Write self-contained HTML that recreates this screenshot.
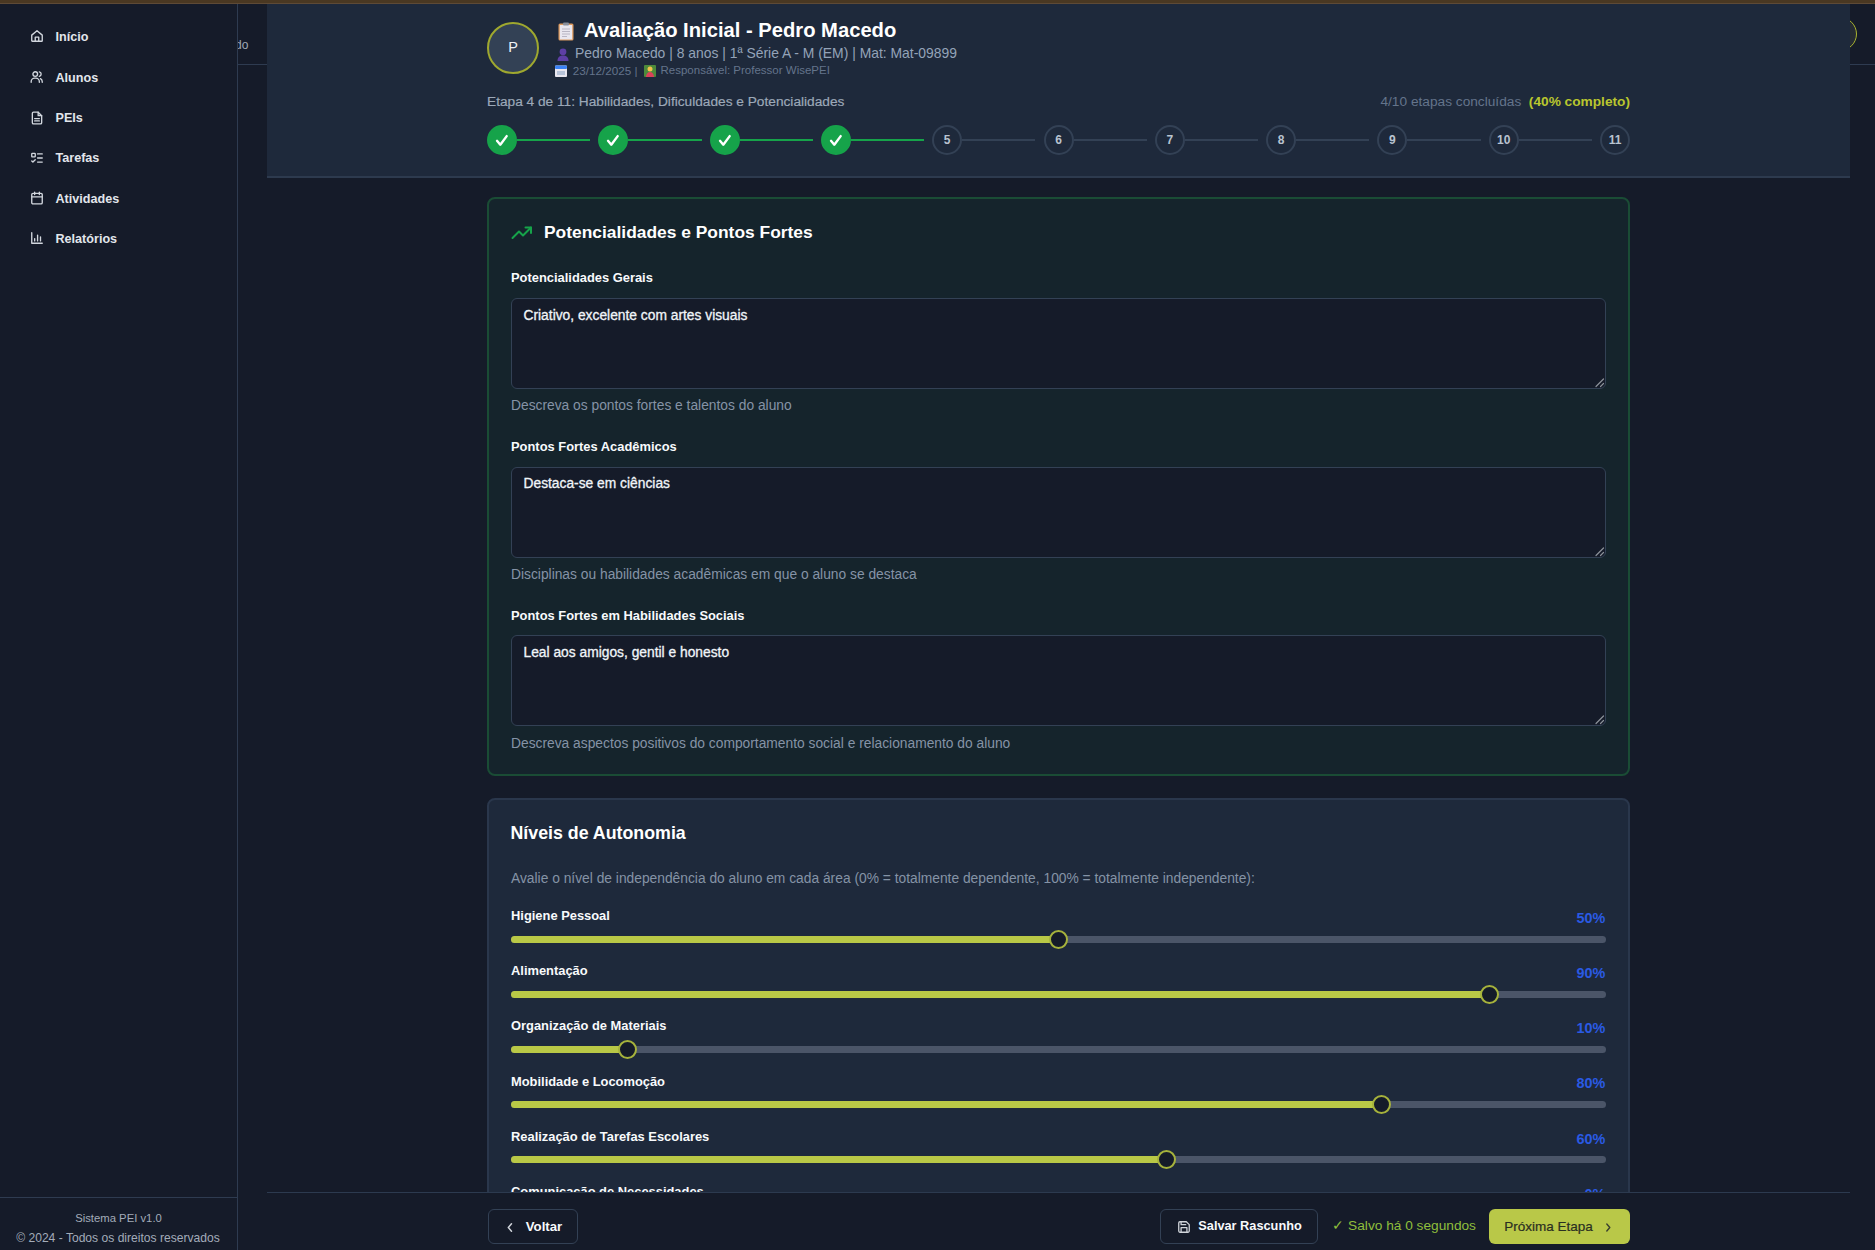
<!DOCTYPE html>
<html lang="pt-BR">
<head>
<meta charset="utf-8">
<title>Avaliação Inicial - Pedro Macedo</title>
<style>
*{box-sizing:border-box;margin:0;padding:0}
html,body{width:1875px;height:1250px;overflow:hidden}
body{background:#151b29;font-family:"Liberation Sans",sans-serif;color:#e5e7eb;position:relative}
.abs{position:absolute;white-space:nowrap}
.box{position:absolute}
.step{position:absolute;top:125px;width:30px;height:30px;border-radius:50%;border:2px solid #334155;text-align:center;font-size:12px;line-height:27px;font-weight:bold;color:#b9c3d0}
.step.done{background:#16a34a;border-color:#16a34a}
.step svg{position:absolute;left:-2px;top:-2px}
</style>
</head>
<body>
<div class="box" style="left:0;top:0;width:1875px;height:4px;background:#4a3822;border-bottom:1px solid #5e4a36"></div>
<div class="abs" style="left:235px;top:39.14px;font-size:12px;line-height:12px;color:#a0a8b4;">do</div>
<div class="box" style="left:0;top:4px;width:238px;height:1246px;background:#151b29;border-right:1px solid #2e3b50"></div>
<svg class="abs" style="left:29.5px;top:29.3px" width="14" height="14" viewBox="0 0 24 24" fill="none" stroke="#d2d7de" stroke-width="2.3" stroke-linecap="round" stroke-linejoin="round"><path d="M3 10.5 12 3l9 7.5V20a1 1 0 0 1-1 1H4a1 1 0 0 1-1-1z"/><path d="M9 21v-7h6v7"/></svg>
<div class="abs" style="left:55.5px;top:30.83px;font-size:12.6px;line-height:12.6px;color:#e2e6ec;font-weight:bold;">Início</div>
<svg class="abs" style="left:29.5px;top:70.3px" width="14" height="14" viewBox="0 0 24 24" fill="none" stroke="#d2d7de" stroke-width="2.3" stroke-linecap="round" stroke-linejoin="round"><circle cx="9" cy="7" r="4"/><path d="M2 21v-1a6 6 0 0 1 6-6h2a6 6 0 0 1 6 6v1"/><path d="M16 3.1a4 4 0 0 1 0 7.8"/><path d="M21 21v-1a6 6 0 0 0-3-5.2"/></svg>
<div class="abs" style="left:55.5px;top:71.83px;font-size:12.6px;line-height:12.6px;color:#e2e6ec;font-weight:bold;">Alunos</div>
<svg class="abs" style="left:29.5px;top:110.8px" width="14" height="14" viewBox="0 0 24 24" fill="none" stroke="#d2d7de" stroke-width="2.3" stroke-linecap="round" stroke-linejoin="round"><path d="M14 2H6a2 2 0 0 0-2 2v16a2 2 0 0 0 2 2h12a2 2 0 0 0 2-2V8z"/><path d="M14 2v6h6"/><path d="M8 13h8M8 17h8"/></svg>
<div class="abs" style="left:55.5px;top:112.33px;font-size:12.6px;line-height:12.6px;color:#e2e6ec;font-weight:bold;">PEIs</div>
<svg class="abs" style="left:29.5px;top:150.5px" width="14" height="14" viewBox="0 0 24 24" fill="none" stroke="#d2d7de" stroke-width="2.3" stroke-linecap="round" stroke-linejoin="round"><path d="M13 5h8M13 12h8M13 19h8"/><path d="M3 17l2 2 4-4"/><rect x="3" y="4" width="6" height="6" rx="1"/></svg>
<div class="abs" style="left:55.5px;top:152.03px;font-size:12.6px;line-height:12.6px;color:#e2e6ec;font-weight:bold;">Tarefas</div>
<svg class="abs" style="left:29.5px;top:191.3px" width="14" height="14" viewBox="0 0 24 24" fill="none" stroke="#d2d7de" stroke-width="2.3" stroke-linecap="round" stroke-linejoin="round"><rect x="3" y="4" width="18" height="18" rx="2"/><path d="M16 2v4M8 2v4M3 10h18"/></svg>
<div class="abs" style="left:55.5px;top:192.83px;font-size:12.6px;line-height:12.6px;color:#e2e6ec;font-weight:bold;">Atividades</div>
<svg class="abs" style="left:29.5px;top:231.3px" width="14" height="14" viewBox="0 0 24 24" fill="none" stroke="#d2d7de" stroke-width="2.3" stroke-linecap="round" stroke-linejoin="round"><path d="M3 3v18h18"/><path d="M8 17v-4M13 17V7M18 17v-7"/></svg>
<div class="abs" style="left:55.5px;top:232.83px;font-size:12.6px;line-height:12.6px;color:#e2e6ec;font-weight:bold;">Relatórios</div>
<div class="box" style="left:0;top:1196.5px;width:237px;height:1.5px;background:#2e3b50"></div>
<div class="abs" style="left:-81.5px;width:400px;text-align:center;top:1213.13px;font-size:11.3px;line-height:11.3px;color:#a3acb9;">Sistema PEI v1.0</div>
<div class="abs" style="left:-82px;width:400px;text-align:center;top:1231.66px;font-size:12.1px;line-height:12.1px;color:#a3acb9;">© 2024 - Todos os direitos reservados</div>
<div class="box" style="left:238px;top:63.5px;width:1637px;height:1.5px;background:#2e3b50"></div>
<div class="box" style="left:1823px;top:17px;width:34px;height:34px;border-radius:50%;border:1.5px solid #a9b32e;background:#252b33"></div>
<div class="box" style="left:267px;top:4px;width:1583px;height:1246px;background:#151b29"></div>
<div class="box" style="left:267px;top:4px;width:1583px;height:174px;background:#1e293b;border-bottom:2px solid #2d3a4e"></div>
<div class="box" style="left:487px;top:22px;width:52px;height:52px;border-radius:50%;border:2px solid #9fa82f;background:#334155"></div>
<div class="abs" style="left:313px;width:400px;text-align:center;top:40.03px;font-size:14.5px;line-height:14.5px;color:#eef2f6;">P</div>
<svg class="abs" style="left:558px;top:22px" width="16" height="19" viewBox="0 0 16 19"><rect x="0.5" y="1.5" width="15" height="17" rx="1.5" fill="#dc9a5e"/><rect x="1.8" y="3" width="12.4" height="14.5" fill="#e9e7ef"/><rect x="5" y="0.5" width="6" height="3" rx="1" fill="#8a8f9a"/><path d="M4 7h8M4 9.5h8M4 12h8M4 14.5h5" stroke="#b9b6c4" stroke-width="1"/></svg>
<div class="abs" style="left:584px;top:20.00px;font-size:20.2px;line-height:20.2px;color:#ffffff;font-weight:bold;">Avaliação Inicial - Pedro Macedo</div>
<svg class="abs" style="left:557px;top:48px" width="12" height="13" viewBox="0 0 12 13"><circle cx="6" cy="3.8" r="3.4" fill="#5e3fa6"/><path d="M0.5 13c0-3.8 2.4-5.4 5.5-5.4s5.5 1.6 5.5 5.4z" fill="#5e3fa6"/></svg>
<div class="abs" style="left:575px;top:46.83px;font-size:13.9px;line-height:13.9px;color:#94a3b8;">Pedro Macedo | 8 anos | 1ª Série A - M (EM) | Mat: Mat-09899</div>
<svg class="abs" style="left:555px;top:65px" width="12" height="12" viewBox="0 0 12 12"><rect x="0" y="0.5" width="12" height="11.5" rx="1" fill="#e9e7f0"/><rect x="0" y="0.5" width="12" height="3.5" rx="1" fill="#3b82f6"/><rect x="2" y="6" width="8" height="4" fill="#b7c3d9"/></svg>
<div class="abs" style="left:572.8px;top:64.60px;font-size:11.7px;line-height:11.7px;color:#64748b;">23/12/2025 |</div>
<svg class="abs" style="left:644px;top:65px" width="12" height="12" viewBox="0 0 12 12"><rect x="0" y="0" width="12" height="12" rx="1" fill="#4d8a3a"/><circle cx="6" cy="4" r="2.5" fill="#f2c14e"/><path d="M2 12c0-3 1.8-5 4-5s4 2 4 5z" fill="#d9425a"/></svg>
<div class="abs" style="left:660.5px;top:64.77px;font-size:11.5px;line-height:11.5px;color:#64748b;">Responsável: Professor WisePEI</div>
<div class="abs" style="left:487px;top:95.00px;font-size:13.7px;line-height:13.7px;color:#9ca8b8;-webkit-text-stroke:0.2px #9ca8b8;">Etapa 4 de 11: Habilidades, Dificuldades e Potencialidades</div>
<div class="abs" style="right:245px;top:94.90px;font-size:13.7px;line-height:13.7px;color:#64748b;">4/10 etapas concluídas&nbsp; <b style="color:#b9c62e">(40% completo)</b></div>
<div class="step done" style="left:487.0px"><svg width="30" height="30" viewBox="0 0 30 30"><path d="M10 15.8l3.3 3.9 6.4-8.6" fill="none" stroke="#fff" stroke-width="2.4" stroke-linecap="round" stroke-linejoin="round"/></svg></div>
<div class="box" style="left:517.0px;top:139px;width:73.3px;height:2px;background:#16a34a"></div>
<div class="step done" style="left:598.3px"><svg width="30" height="30" viewBox="0 0 30 30"><path d="M10 15.8l3.3 3.9 6.4-8.6" fill="none" stroke="#fff" stroke-width="2.4" stroke-linecap="round" stroke-linejoin="round"/></svg></div>
<div class="box" style="left:628.3px;top:139px;width:73.3px;height:2px;background:#16a34a"></div>
<div class="step done" style="left:709.6px"><svg width="30" height="30" viewBox="0 0 30 30"><path d="M10 15.8l3.3 3.9 6.4-8.6" fill="none" stroke="#fff" stroke-width="2.4" stroke-linecap="round" stroke-linejoin="round"/></svg></div>
<div class="box" style="left:739.6px;top:139px;width:73.3px;height:2px;background:#16a34a"></div>
<div class="step done" style="left:820.9px"><svg width="30" height="30" viewBox="0 0 30 30"><path d="M10 15.8l3.3 3.9 6.4-8.6" fill="none" stroke="#fff" stroke-width="2.4" stroke-linecap="round" stroke-linejoin="round"/></svg></div>
<div class="box" style="left:850.9px;top:139px;width:73.3px;height:2px;background:#16a34a"></div>
<div class="step" style="left:932.2px">5</div>
<div class="box" style="left:962.2px;top:139px;width:73.3px;height:2px;background:#334155"></div>
<div class="step" style="left:1043.5px">6</div>
<div class="box" style="left:1073.5px;top:139px;width:73.3px;height:2px;background:#334155"></div>
<div class="step" style="left:1154.8px">7</div>
<div class="box" style="left:1184.8px;top:139px;width:73.3px;height:2px;background:#334155"></div>
<div class="step" style="left:1266.1px">8</div>
<div class="box" style="left:1296.1px;top:139px;width:73.3px;height:2px;background:#334155"></div>
<div class="step" style="left:1377.4px">9</div>
<div class="box" style="left:1407.4px;top:139px;width:73.3px;height:2px;background:#334155"></div>
<div class="step" style="left:1488.7px">10</div>
<div class="box" style="left:1518.7px;top:139px;width:73.3px;height:2px;background:#334155"></div>
<div class="step" style="left:1600.0px">11</div>
<div class="box" style="left:487px;top:197px;width:1143px;height:579px;border-radius:8px;border:2px solid #1a4c35;background:#15242c"></div>
<svg class="abs" style="left:511px;top:224px" width="22" height="16" viewBox="0 0 22 16" fill="none" stroke="#16a34a" stroke-width="2" stroke-linecap="round" stroke-linejoin="round"><path d="M1.5 14 8 7.5l4 4L20 3.5"/><path d="M14.5 3.5H20V9"/></svg>
<div class="abs" style="left:544px;top:223.97px;font-size:17.4px;line-height:17.4px;color:#ffffff;font-weight:bold;">Potencialidades e Pontos Fortes</div>
<div class="abs" style="left:511px;top:271.98px;font-size:12.9px;line-height:12.9px;color:#f8fafc;font-weight:bold;">Potencialidades Gerais</div>
<div class="box" style="left:511px;top:297.7px;width:1095px;height:91px;border-radius:6px;border:1px solid #334155;background:#151b29"></div>
<svg class="abs" style="left:1595px;top:377.7px" width="10" height="10" viewBox="0 0 10 10" stroke="#8c929a" stroke-width="1.2" stroke-linecap="round"><path d="M8.5 1 1 8.5M8.5 5.5 5.5 8.5"/></svg>
<div class="abs" style="left:523.5px;top:308.62px;font-size:13.8px;line-height:13.8px;color:#f1f5f9;-webkit-text-stroke:0.3px #f1f5f9;">Criativo, excelente com artes visuais</div>
<div class="abs" style="left:511px;top:399.02px;font-size:13.8px;line-height:13.8px;color:#8593a6;">Descreva os pontos fortes e talentos do aluno</div>
<div class="abs" style="left:511px;top:440.78px;font-size:12.9px;line-height:12.9px;color:#f8fafc;font-weight:bold;">Pontos Fortes Acadêmicos</div>
<div class="box" style="left:511px;top:466.5px;width:1095px;height:91px;border-radius:6px;border:1px solid #334155;background:#151b29"></div>
<svg class="abs" style="left:1595px;top:546.5px" width="10" height="10" viewBox="0 0 10 10" stroke="#8c929a" stroke-width="1.2" stroke-linecap="round"><path d="M8.5 1 1 8.5M8.5 5.5 5.5 8.5"/></svg>
<div class="abs" style="left:523.5px;top:477.42px;font-size:13.8px;line-height:13.8px;color:#f1f5f9;-webkit-text-stroke:0.3px #f1f5f9;">Destaca-se em ciências</div>
<div class="abs" style="left:511px;top:567.82px;font-size:13.8px;line-height:13.8px;color:#8593a6;">Disciplinas ou habilidades acadêmicas em que o aluno se destaca</div>
<div class="abs" style="left:511px;top:609.58px;font-size:12.9px;line-height:12.9px;color:#f8fafc;font-weight:bold;">Pontos Fortes em Habilidades Sociais</div>
<div class="box" style="left:511px;top:635.3px;width:1095px;height:91px;border-radius:6px;border:1px solid #334155;background:#151b29"></div>
<svg class="abs" style="left:1595px;top:715.3px" width="10" height="10" viewBox="0 0 10 10" stroke="#8c929a" stroke-width="1.2" stroke-linecap="round"><path d="M8.5 1 1 8.5M8.5 5.5 5.5 8.5"/></svg>
<div class="abs" style="left:523.5px;top:646.22px;font-size:13.8px;line-height:13.8px;color:#f1f5f9;-webkit-text-stroke:0.3px #f1f5f9;">Leal aos amigos, gentil e honesto</div>
<div class="abs" style="left:511px;top:736.62px;font-size:13.8px;line-height:13.8px;color:#8593a6;">Descreva aspectos positivos do comportamento social e relacionamento do aluno</div>
<div class="box" style="left:487px;top:798px;width:1143px;height:460px;border-radius:8px;border:2px solid #2a374c;background:#1e293b"></div>
<div class="abs" style="left:510.5px;top:824.63px;font-size:17.8px;line-height:17.8px;color:#ffffff;font-weight:bold;">Níveis de Autonomia</div>
<div class="abs" style="left:511px;top:872.42px;font-size:13.8px;line-height:13.8px;color:#8593a6;">Avalie o nível de independência do aluno em cada área (0% = totalmente dependente, 100% = totalmente independente):</div>
<div class="abs" style="left:511px;top:910.18px;font-size:12.9px;line-height:12.9px;color:#f8fafc;font-weight:bold;">Higiene Pessoal</div>
<div class="abs" style="right:269.79999999999995px;top:910.91px;font-size:14.4px;line-height:14.4px;color:#2a5ae4;font-weight:bold;">50%</div>
<div class="box" style="left:511px;top:935.6px;width:1095px;height:7px;border-radius:4px;background:#4b5568"></div>
<div class="box" style="left:511px;top:935.6px;width:547.5px;height:7px;border-radius:4px 0 0 4px;background:#b9c846"></div>
<div class="box" style="left:1049.0px;top:929.6px;width:19px;height:19px;border-radius:50%;border:2px solid #a6b23c;background:#151b29"></div>
<div class="abs" style="left:511px;top:965.33px;font-size:12.9px;line-height:12.9px;color:#f8fafc;font-weight:bold;">Alimentação</div>
<div class="abs" style="right:269.79999999999995px;top:966.06px;font-size:14.4px;line-height:14.4px;color:#2a5ae4;font-weight:bold;">90%</div>
<div class="box" style="left:511px;top:990.75px;width:1095px;height:7px;border-radius:4px;background:#4b5568"></div>
<div class="box" style="left:511px;top:990.75px;width:978.3px;height:7px;border-radius:4px 0 0 4px;background:#b9c846"></div>
<div class="box" style="left:1479.8px;top:984.75px;width:19px;height:19px;border-radius:50%;border:2px solid #a6b23c;background:#151b29"></div>
<div class="abs" style="left:511px;top:1020.48px;font-size:12.9px;line-height:12.9px;color:#f8fafc;font-weight:bold;">Organização de Materiais</div>
<div class="abs" style="right:269.79999999999995px;top:1021.21px;font-size:14.4px;line-height:14.4px;color:#2a5ae4;font-weight:bold;">10%</div>
<div class="box" style="left:511px;top:1045.9px;width:1095px;height:7px;border-radius:4px;background:#4b5568"></div>
<div class="box" style="left:511px;top:1045.9px;width:116.7px;height:7px;border-radius:4px 0 0 4px;background:#b9c846"></div>
<div class="box" style="left:618.2px;top:1039.9px;width:19px;height:19px;border-radius:50%;border:2px solid #a6b23c;background:#151b29"></div>
<div class="abs" style="left:511px;top:1075.63px;font-size:12.9px;line-height:12.9px;color:#f8fafc;font-weight:bold;">Mobilidade e Locomoção</div>
<div class="abs" style="right:269.79999999999995px;top:1076.36px;font-size:14.4px;line-height:14.4px;color:#2a5ae4;font-weight:bold;">80%</div>
<div class="box" style="left:511px;top:1101.05px;width:1095px;height:7px;border-radius:4px;background:#4b5568"></div>
<div class="box" style="left:511px;top:1101.05px;width:870.6px;height:7px;border-radius:4px 0 0 4px;background:#b9c846"></div>
<div class="box" style="left:1372.1px;top:1095.05px;width:19px;height:19px;border-radius:50%;border:2px solid #a6b23c;background:#151b29"></div>
<div class="abs" style="left:511px;top:1130.78px;font-size:12.9px;line-height:12.9px;color:#f8fafc;font-weight:bold;">Realização de Tarefas Escolares</div>
<div class="abs" style="right:269.79999999999995px;top:1131.51px;font-size:14.4px;line-height:14.4px;color:#2a5ae4;font-weight:bold;">60%</div>
<div class="box" style="left:511px;top:1156.2px;width:1095px;height:7px;border-radius:4px;background:#4b5568"></div>
<div class="box" style="left:511px;top:1156.2px;width:655.2px;height:7px;border-radius:4px 0 0 4px;background:#b9c846"></div>
<div class="box" style="left:1156.7px;top:1150.2px;width:19px;height:19px;border-radius:50%;border:2px solid #a6b23c;background:#151b29"></div>
<div class="abs" style="left:511px;top:1185.93px;font-size:12.9px;line-height:12.9px;color:#f8fafc;font-weight:bold;">Comunicação de Necessidades</div>
<div class="abs" style="right:269.79999999999995px;top:1186.66px;font-size:14.4px;line-height:14.4px;color:#2a5ae4;font-weight:bold;">0%</div>
<div class="box" style="left:511px;top:1211.35px;width:1095px;height:7px;border-radius:4px;background:#4b5568"></div>
<div class="box" style="left:511px;top:1211.35px;width:9.0px;height:7px;border-radius:4px 0 0 4px;background:#b9c846"></div>
<div class="box" style="left:510.5px;top:1205.35px;width:19px;height:19px;border-radius:50%;border:2px solid #a6b23c;background:#151b29"></div>
<div class="box" style="left:267px;top:1192px;width:1583px;height:58px;background:#151b29;border-top:1px solid #2c3a4f"></div>
<div class="box" style="left:487.5px;top:1209px;width:90px;height:35px;border-radius:6px;border:1px solid #334155"></div>
<svg class="abs" style="left:505px;top:1221.5px" width="10" height="11" viewBox="0 0 10 11" fill="none" stroke="#cfd3da" stroke-width="1.5" stroke-linecap="round" stroke-linejoin="round"><path d="M6.5 1.8 3.3 5.5l3.2 3.7"/></svg>
<div class="abs" style="left:525.8px;top:1219.83px;font-size:13.2px;line-height:13.2px;color:#f8fafc;font-weight:bold;">Voltar</div>
<div class="box" style="left:1160px;top:1209px;width:158px;height:35px;border-radius:6px;border:1px solid #334155"></div>
<svg class="abs" style="left:1176.5px;top:1220.2px" width="14" height="14" viewBox="0 0 24 24" fill="none" stroke="#d1d5db" stroke-width="2.2" stroke-linecap="round" stroke-linejoin="round"><path d="M19 21H5a2 2 0 0 1-2-2V5a2 2 0 0 1 2-2h11l5 5v11a2 2 0 0 1-2 2z"/><path d="M17 21v-8H7v8M7 3v5h8"/></svg>
<div class="abs" style="left:1198.3px;top:1220.21px;font-size:12.75px;line-height:12.75px;color:#f8fafc;font-weight:bold;">Salvar Rascunho</div>
<div class="abs" style="left:1332.3px;top:1219.40px;font-size:13.7px;line-height:13.7px;color:#8fbf3c;">✓ Salvo há 0 segundos</div>
<div class="box" style="left:1489px;top:1208.5px;width:141px;height:35.5px;border-radius:6px;background:#b9c848"></div>
<div class="abs" style="left:1504.2px;top:1219.57px;font-size:13.5px;line-height:13.5px;color:#2a2f22;-webkit-text-stroke:0.2px #2a2f22;">Próxima Etapa</div>
<svg class="abs" style="left:1603px;top:1221.5px" width="10" height="11" viewBox="0 0 10 11" fill="none" stroke="#3a4030" stroke-width="1.4" stroke-linecap="round" stroke-linejoin="round"><path d="M3.8 2 6.8 5.5l-3 3.5"/></svg>
</body>
</html>
